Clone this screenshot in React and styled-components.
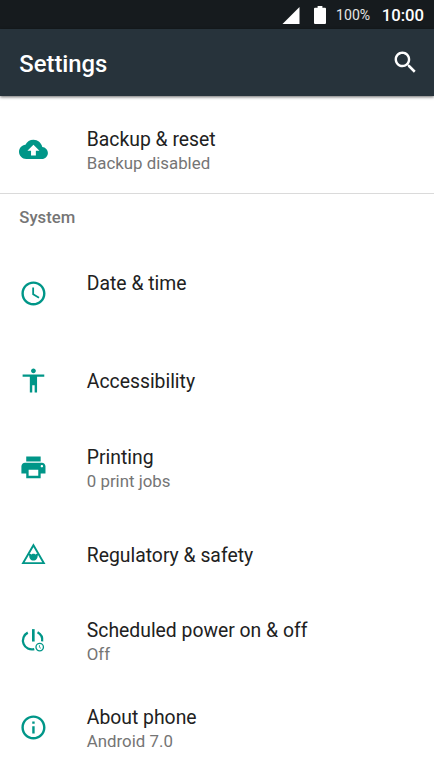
import React from 'react';
import styled, { createGlobalStyle } from 'styled-components';

const variable = {
    accent: '#009688',
    statusbar: '#161b1e',
    toolbar: '#27333b',
    text: '#212121',
    secondary: '#757575',
    divider: '#dadada',
}

const GlobalStyle = createGlobalStyle`
    body {
        margin: 0;
        background: #fff;
        overflow: hidden;
        font-family: Roboto, "Liberation Sans", sans-serif;
    }
`;

const Screen = styled.div`
    display: flex;
    flex-direction: column;
    width: 434px;
    height: 771px;
    overflow: hidden;
    background: #fff;
`;

const StatusBar = styled.div`
    display: flex;
    flex: none;
    align-items: center;
    justify-content: flex-end;
    box-sizing: border-box;
    height: 29px;
    padding: 1px 10px 0 0;
    background: ${variable.statusbar};
    color: #fff;

    .signal {
        margin-right: 14px;
    }
`;

const Battery = styled.span`
    margin: 0 0 0 10px;
    color: #e4e5e5;
    font-size: 14.1px;
    line-height: 20px;
`;

const Clock = styled.span`
    margin: 2px 0 0 11.5px;
    font-size: 16.7px;
    font-weight: 500;
    line-height: 20px;
`;

const Toolbar = styled.header`
    display: flex;
    flex: none;
    align-items: center;
    justify-content: space-between;
    box-sizing: border-box;
    height: 67px;
    padding: 0 14.5px 0 19.3px;
    background: ${variable.toolbar};
    color: #fff;
    box-shadow: 0 1px 3px rgba(0, 0, 0, .6);
    z-index: 1;
`;

const Title = styled.h1`
    margin: 2px 0 0;
    font-size: 23.8px;
    font-weight: 500;
    line-height: 28px;
`;

const List = styled.ul`
    margin: 0;
    padding: ${props => props.$top || 0}px 0 0;
    list-style: none;
`;

const StyleItem = styled.li`
    display: flex;
    align-items: center;
    box-sizing: border-box;
    height: ${props => props.$height || 86.8}px;
    padding-left: 19.3px;

    .item__icon {
        flex: none;
        margin-right: 38.6px;
    }

    .item__text {
        padding-top: 4px;
    }

    .item__title {
        display: block;
        color: ${variable.text};
        font-size: 19.35px;
        line-height: 24px;
    }

    .item__summary {
        display: block;
        min-height: 23px;
        color: ${variable.secondary};
        font-size: 16.85px;
        line-height: 23px;
    }
`;

const Subheader = styled.h2`
    box-sizing: border-box;
    height: 57.3px;
    margin: 0;
    padding: 13px 0 0 19.3px;
    border-top: 1px solid ${variable.divider};
    color: ${variable.secondary};
    font-size: 16.7px;
    font-weight: 500;
    line-height: 22px;
`;

const Icon = ({ children, color = variable.accent, className }) => (
    <svg className={className} width="28.9" height="28.9" viewBox="0 0 24 24" fill={color}>
        {children}
    </svg>
);

const icons = {
    backup: <path d="M19.35 10.04C18.67 6.59 15.64 4 12 4 9.11 4 6.6 5.64 5.35 8.04 2.34 8.36 0 10.91 0 14c0 3.31 2.69 6 6 6h13c2.76 0 5-2.24 5-5 0-2.64-2.05-4.78-4.65-4.96zM14 13v4h-4v-4H7l5-5 5 5h-3z" />,
    clock: <path d="M11.99 2C6.47 2 2 6.48 2 12s4.47 10 9.99 10C17.52 22 22 17.52 22 12S17.52 2 11.99 2zM12 20c-4.42 0-8-3.58-8-8s3.58-8 8-8 8 3.58 8 8-3.58 8-8 8zm.5-13H11v6l5.25 3.15.75-1.23-4.5-2.67z" />,
    accessibility: <path d="M12 2c1.1 0 2 .9 2 2s-.9 2-2 2-2-.9-2-2 .9-2 2-2zm9 7h-6v13h-2v-6h-2v6H9V9H3V7h18v2z" />,
    print: <path d="M19 8H5c-1.66 0-3 1.34-3 3v6h4v4h12v-4h4v-6c0-1.66-1.34-3-3-3zm-3 11H8v-5h8v5zm3-7c-.55 0-1-.45-1-1s.45-1 1-1 1 .45 1 1-.45 1-1 1zm-1-9H6v4h12V3z" />,
    safety: (
        <>
            <path d="M12 4.3L20.6 19.2H3.4z" fill="none" stroke={variable.accent} strokeWidth="1.6" />
            <path d="M8.2 11.5h1.2l1 .6.8-.6h1.6l.8.6 1-.6h1.2v1.3h-.3c.1 2.4-1.2 4.2-3.5 4.2s-3.6-1.8-3.5-4.2h-.3z" />
        </>
    ),
    power: (
        <>
            <path d="M10.8 2.6H13v10.3h-2.2z" />
            <path d="M7.3 5.5A7.4 7.4 0 0 0 12.7 19.2M15.4 5.2A7.4 7.4 0 0 1 19.2 12.8" fill="none" stroke={variable.accent} strokeWidth="1.9" />
            <circle cx="17.2" cy="17.5" r="3.1" fill="none" stroke={variable.accent} strokeWidth="1.1" />
            <path d="M17 15.9v1.8l1.3.9" fill="none" stroke={variable.accent} strokeWidth=".65" />
        </>
    ),
    info: <path d="M11 17h2v-6h-2v6zm1-15C6.48 2 2 6.48 2 12s4.48 10 10 10 10-4.48 10-10S17.52 2 12 2zm0 18c-4.41 0-8-3.59-8-8s3.59-8 8-8 8 3.59 8 8-3.59 8-8 8zM11 9h2V7h-2v2z" />,
    search: <path d="M15.5 14h-.79l-.28-.27C15.41 12.59 16 11.11 16 9.5 16 5.91 13.09 3 9.5 3S3 5.91 3 9.5 5.91 16 9.5 16c1.61 0 3.09-.59 4.23-1.57l.27.28v.79l5 4.99L20.49 19l-4.99-5zm-6 0C7.01 14 5 11.99 5 9.5S7.01 5 9.5 5 14 7.01 14 9.5 11.99 14 9.5 14z" />,
}

// An empty summary keeps its line, a missing one does not
const system = [
    { icon: 'clock', title: 'Date & time', summary: '' },
    { icon: 'accessibility', title: 'Accessibility' },
    { icon: 'print', title: 'Printing', summary: '0 print jobs' },
    { icon: 'safety', title: 'Regulatory & safety' },
    { icon: 'power', title: 'Scheduled power on & off', summary: 'Off' },
    { icon: 'info', title: 'About phone', summary: 'Android 7.0' },
];

const Item = ({ icon, title, summary, height }) => (
    <StyleItem $height={height}>
        <Icon className="item__icon">{icons[icon]}</Icon>
        <div className="item__text">
            <span className="item__title">{title}</span>
            {summary !== undefined && <span className="item__summary">{summary}</span>}
        </div>
    </StyleItem>
);

const App = () => {
    return (
        <>
            <GlobalStyle />
            <Screen>
                <StatusBar>
                    <svg className="signal" width="18" height="17" viewBox="0 0 18 17" fill="#fff">
                        <path d="M17.5 0v17H.5z" />
                    </svg>
                    <svg width="12" height="18" viewBox="0 0 12 18" fill="#fff">
                        <path d="M3.6 0h4.8v1.8H11q1 0 1 1V17q0 1-1 1H1q-1 0-1-1V2.8q0-1 1-1h2.6z" />
                    </svg>
                    <Battery>100%</Battery>
                    <Clock>10:00</Clock>
                </StatusBar>
                <Toolbar>
                    <Title>Settings</Title>
                    <Icon color="#fff">{icons.search}</Icon>
                </Toolbar>
                <List $top={10}>
                    <Item icon="backup" title="Backup & reset" summary="Backup disabled" height={87} />
                </List>
                <Subheader>System</Subheader>
                <List>
                    {system.map((item) => (
                        <Item key={item.title} {...item} />
                    ))}
                </List>
            </Screen>
        </>
    )
};

export default App;
